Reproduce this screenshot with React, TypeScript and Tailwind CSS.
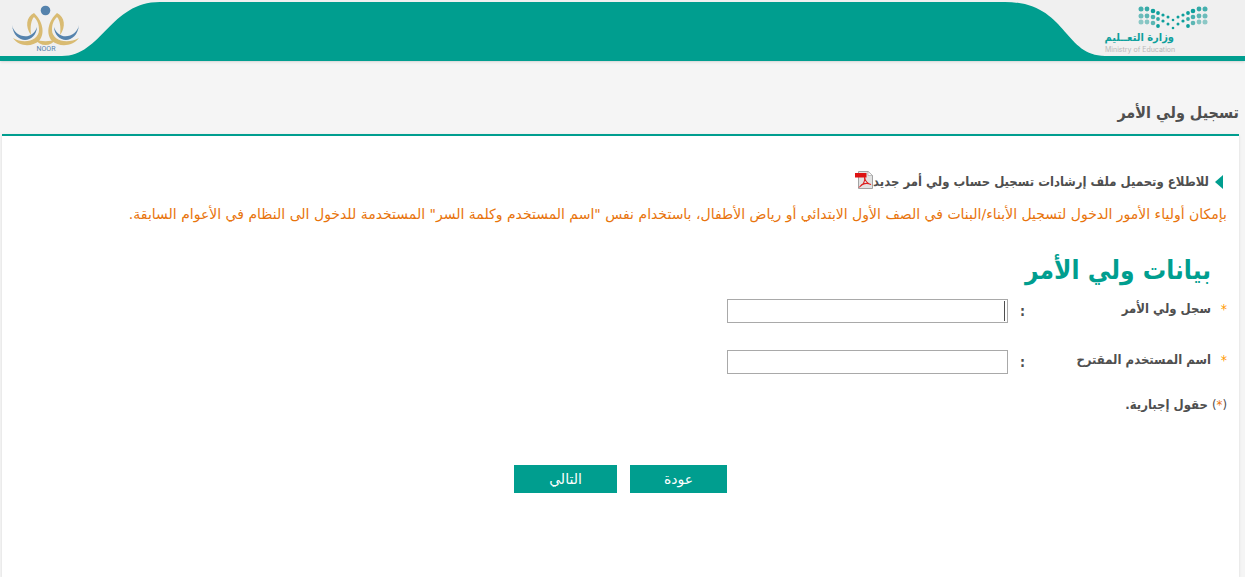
import { useState } from 'react';

const dotColumns = [
  { x: 44, ys: [7, 14, 20], r: 2.5, tone: ['#45b0ae', '#6cbcbb', '#8cc8c6'] },
  { x: 50, ys: [7, 14, 20], r: 2.4, tone: ['#35aaa7', '#5cb6b4', '#84c5c3'] },
  { x: 56, ys: [9, 15, 21], r: 2.3, tone: ['#0d9f9c', '#45b0ae', '#5cb6b4'] },
  { x: 61, ys: [11, 17, 24], r: 1.9, tone: ['#0d9f9c', '#35aaa7', '#0d9f9c'] },
  { x: 66, ys: [13, 19], r: 1.6, tone: ['#0d9f9c', '#0d9f9c'] },
  { x: 71, ys: [15, 22], r: 1.5, tone: ['#0d9f9c', '#0d9f9c'] },
  { x: 76, ys: [18, 26], r: 1.3, tone: ['#0d9f9c', '#0d9f9c'] },
  { x: 81, ys: [15, 22], r: 1.5, tone: ['#0d9f9c', '#0d9f9c'] },
  { x: 86, ys: [13, 19], r: 1.6, tone: ['#0d9f9c', '#0d9f9c'] },
  { x: 91, ys: [11, 17, 24], r: 1.9, tone: ['#0d9f9c', '#35aaa7', '#0d9f9c'] },
  { x: 96, ys: [9, 15, 21], r: 2.3, tone: ['#0d9f9c', '#45b0ae', '#5cb6b4'] },
  { x: 102, ys: [7, 14, 20], r: 2.4, tone: ['#35aaa7', '#5cb6b4', '#84c5c3'] },
  { x: 108, ys: [7, 14, 20], r: 2.5, tone: ['#45b0ae', '#6cbcbb', '#8cc8c6'] },
];

const fields = [
  { id: 'guardianId', label: 'سجل ولي الأمر', active: true },
  { id: 'userName', label: 'اسم المستخدم المقترح', active: false },
];

function NoorLogo() {
  return (
    <svg viewBox="0 0 72 50" className="h-[50px] w-[72px]" role="img" aria-label="Noor">
      <circle cx="35.500" cy="6.500" r="4.800" fill="#5583ad" />
      <g fill="#d9bb72">
        <path d="M24 9C16 13 15 23 21 31C20 23 21 16 24 13C28 17 29 21 29 26C29 36 15 41 3 34C9 43 22 43 29 37C36 29 32 16 24 9Z" />
        <path d="M47 9C55 13 56 23 50 31C51 23 50 16 47 13C43 17 42 21 42 26C42 36 56 41 69 34C62 43 49 43 42 37C35 29 39 16 47 9Z" />
        <path d="M25 35C31 38 40 38 46 35C41 43 30 43 25 35Z" />
      </g>
      <g fill="#5583ad">
        <path d="M2 21C4 33 22 38 27 23C26 40 4 41 2 21Z" />
        <path d="M69 21C67 33 49 38 44 23C45 40 67 41 69 21Z" />
      </g>
      <text x="36" y="47" textAnchor="middle" fontSize="7" fontFamily="Roboto, sans-serif" fill="#5583ad">
        NOOR
      </text>
    </svg>
  );
}

function MinistryLogo() {
  return (
    <svg viewBox="0 0 112 54" className="h-[54px] w-[112px]" role="img" aria-label="وزارة التعليم">
      {dotColumns.map((column) =>
        column.ys.map((y, i) => (
          <circle key={`${column.x}-${y}`} cx={column.x} cy={y} r={column.r} fill={column.tone[i]} />
        ))
      )}
      <text
        x="77"
        y="39"
        direction="rtl"
        fontSize="11"
        fontWeight="700"
        fontFamily="'DejaVu Sans Condensed', 'DejaVu Sans', sans-serif"
        fill="#0d9f9c"
      >
        وزارة التعــليم
      </text>
      <text x="8" y="50" fontSize="7" fontFamily="Inter, sans-serif" fill="#b9b9b9">
        Ministry of Education
      </text>
    </svg>
  );
}

function PdfIcon() {
  return (
    <svg viewBox="0 0 18 18" className="mb-1 h-[18px] w-[18px]" aria-hidden="true">
      <path d="M3.500 .5H13L17.500 4.500V17.500H3.500Z" fill="#e3e3e3" stroke="#a3a3a3" />
      <path d="M13 .5V4.500H17.500Z" fill="#fff" stroke="#a3a3a3" strokeWidth=".6" />
      <path d="M0 2H11.500V6.500H0Z" fill="#dd1313" />
      <path
        d="M9.500 6C10.500 10 8 14 5 15.500C7 12.500 12 11.500 16 13.500C13 13 10 10 9.500 6Z"
        fill="none"
        stroke="#d22"
        strokeWidth="1.100"
      />
    </svg>
  );
}

function Header() {
  return (
    <header dir="ltr" className="border-b-[5px] border-[#009e8f] bg-[#f0f0f0] shadow-sm">
      <div className="flex h-14 pt-0.5">
        <div className="relative w-40 shrink-0">
          <svg viewBox="0 0 160 54" className="block h-[54px] w-40" aria-hidden="true">
            <path d="M62 54C102 54 110 0 160 0V54Z" fill="#009e8f" />
          </svg>
          <div className="absolute top-0.5 left-2.5">
            <NoorLogo />
          </div>
        </div>
        <div className="flex-1 bg-[#009e8f]" />
        <div className="relative w-60 shrink-0">
          <svg viewBox="0 0 240 54" className="block h-[54px] w-60" aria-hidden="true">
            <path d="M0 0C62 0 58 54 100 54H0Z" fill="#009e8f" />
          </svg>
          <div className="absolute top-0 right-9">
            <MinistryLogo />
          </div>
        </div>
      </div>
    </header>
  );
}

export default function App() {
  const [values, setValues] = useState<Record<string, string>>({});

  return (
    <div
      dir="rtl"
      className="flex min-h-screen flex-col bg-[#f5f5f5] font-['DejaVu_Sans_Condensed','DejaVu_Sans',sans-serif] text-sm text-[#4f4f4f]"
    >
      <Header />
      <main className="mr-1.5 ml-0.5 flex flex-1 flex-col">
        <h1 className="mt-9 flex h-[37px] items-start text-base leading-8 font-bold">تسجيل ولي الأمر</h1>

        <div className="flex-1 border-t-2 border-[#009e8f] bg-white px-3 pt-8 shadow-sm">
          <a href="#guide" className="flex h-7 items-center text-[13px] font-bold">
            <svg viewBox="0 0 8 14" className="mr-1 ml-1.5 h-3.5 w-2" aria-hidden="true">
              <path d="M8 0V14L0 7Z" fill="#009e8f" />
            </svg>
            للاطلاع وتحميل ملف إرشادات تسجيل حساب ولي أمر جديد
            <PdfIcon />
          </a>
          <p className="mt-0.5 font-['DejaVu_Sans',sans-serif] leading-8 text-[#e8740c]">
            بإمكان أولياء الأمور الدخول لتسجيل الأبناء/البنات في الصف الأول الابتدائي أو رياض الأطفال، باستخدام نفس "اسم
            المستخدم وكلمة السر" المستخدمة للدخول الى النظام في الأعوام السابقة.
          </p>

          <form onSubmit={(e) => e.preventDefault()}>
            <h2 className="mt-3.5 mr-4 mb-[3px] text-[26px] leading-13 font-bold text-[#009e8f]">بيانات ولي الأمر</h2>
            {fields.map((field) => (
              <div key={field.id} className="flex h-[51px] items-start">
                <span className="w-4 text-[#ff9900]">*</span>
                <label htmlFor={field.id} className="w-[186px] text-[13px] leading-5 font-bold">
                  {field.label}
                </label>
                <span className="w-[17px] leading-6 font-bold">:</span>
                <div className="relative">
                  <input
                    id={field.id}
                    type="text"
                    required
                    value={values[field.id] ?? ''}
                    onChange={(e) => setValues({ ...values, [field.id]: e.target.value })}
                    className="block h-6 w-[281px] border border-[#a9a9a9] bg-white px-1 outline-none"
                  />
                  {field.active && <span className="absolute top-0.5 right-[3px] h-5 w-px bg-[#4f4f4f]" />}
                </div>
              </div>
            ))}
            <p className="-mt-2 text-[13px] leading-6 font-bold">
              <span className="font-normal">
                (<span className="text-[#e8740c]">*</span>)
              </span>{' '}
              حقول إجبارية.
            </p>
            <div className="mt-12 flex justify-center gap-[13px]">
              <button type="button" className="h-7 w-[97px] bg-[#009e8f] font-['DejaVu_Sans',sans-serif] text-white">
                عودة
              </button>
              <button type="submit" className="h-7 w-[103px] bg-[#009e8f] font-['DejaVu_Sans',sans-serif] text-white">
                التالي
              </button>
            </div>
          </form>
        </div>
      </main>
    </div>
  );
}
